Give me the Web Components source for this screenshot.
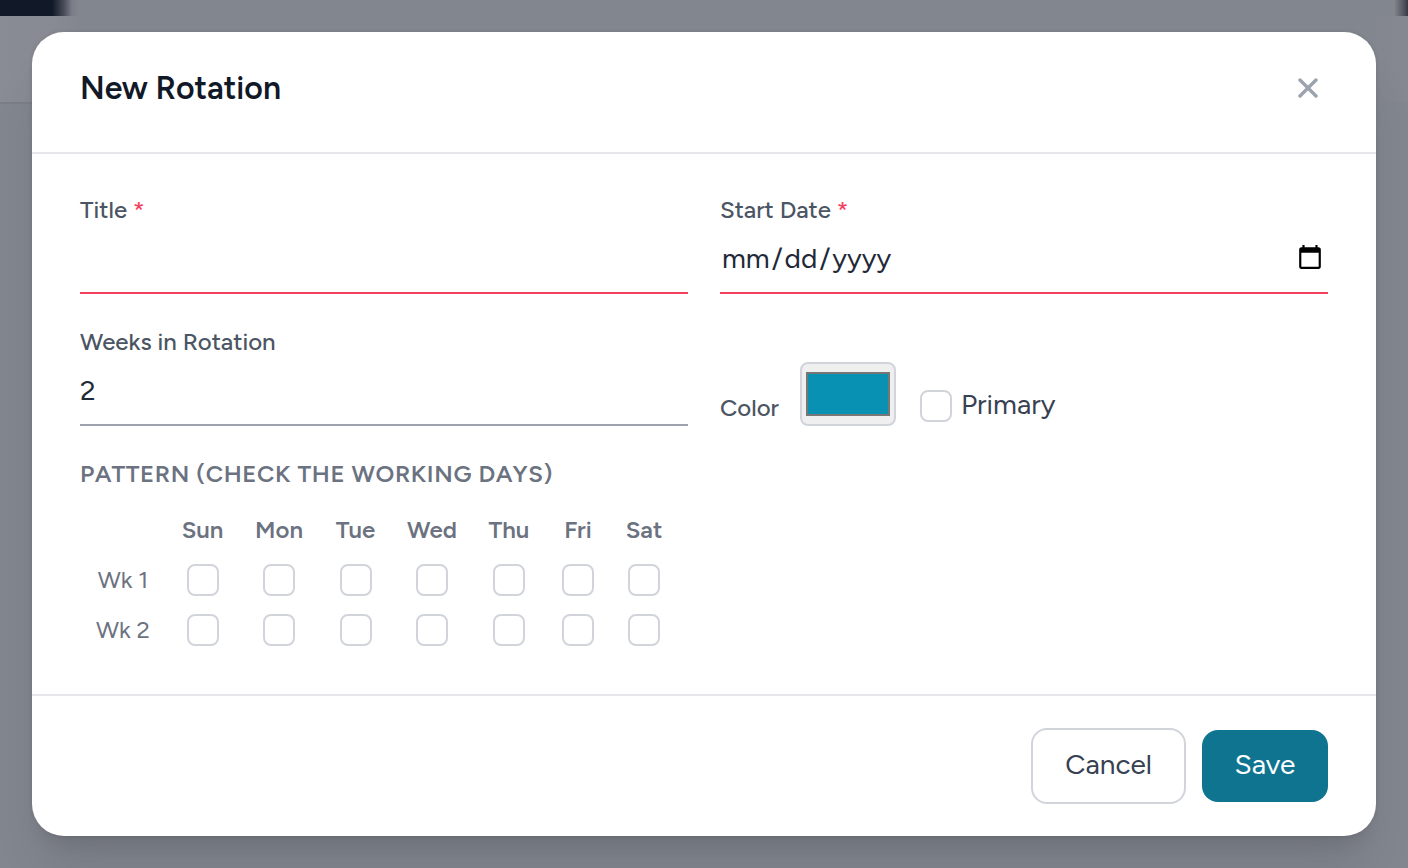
<!DOCTYPE html>
<html lang="en">
<head>
<meta charset="utf-8">
<meta name="viewport" content="width=device-width, initial-scale=1">
<title>New Rotation</title>
<style>
  body {
    margin: 0;
    font-family: Figtree, Lato, "Open Sans", sans-serif;
    color: #1f2937;
  }
</style>
</head>
<body>
<modal-backdrop>
  <modal-dialog heading="New Rotation">
    <rotation-form></rotation-form>
    <action-button slot="actions" variant="secondary">Cancel</action-button>
    <action-button slot="actions" variant="primary">Save</action-button>
  </modal-dialog>
</modal-backdrop>

<script>
class ModalBackdrop extends HTMLElement {
  constructor() {
    super();
    this.attachShadow({ mode: "open" });
    // the blurred page behind: nav strip, page header, content
    this.shadowRoot.innerHTML = `
      <style>
        :host {
          display: block;
          box-sizing: border-box;
          min-height: 100vh;
          padding: 32px;
          background:
            linear-gradient(90deg, #111827 0, #111827 52px, #494d59 64px, #7b7e88 72px, #82868e 80px, #82868e calc(100% - 14px), #4b4e59 calc(100% - 3px), #343743 100%) 0 0 / 100% 16px no-repeat,
            linear-gradient(90deg, #7b7e87 0, #7b7e87 60px, transparent 80px) 0 102px / 100% 2px no-repeat,
            linear-gradient(90deg, #8a8c95 0, #888a93 56px, #82868e 80px, #82868e calc(100% - 40px), #868891 100%) 0 16px / 100% 86px no-repeat,
            #82868f;
        }
      </style>
      <slot></slot>
    `;
  }
}

class ModalDialog extends HTMLElement {
  constructor() {
    super();
    this.attachShadow({ mode: "open" });
  }

  connectedCallback() {
    this.shadowRoot.innerHTML = `
      <style>
        :host {
          display: block;
          background: #fff;
          border-radius: 32px;
          box-shadow: 0 40px 50px -10px rgba(0, 0, 0, 0.1), 0 16px 20px -12px rgba(0, 0, 0, 0.1), 0 0 4px rgba(0, 0, 0, 0.1);
        }

        header {
          display: flex;
          align-items: center;
          justify-content: space-between;
          padding: 36px 48px 44px;
          border-bottom: 2px solid #e5e7eb;
        }

        h2 {
          margin: 0;
          font-size: 32px;
          line-height: 40px;
          font-weight: 600;
          color: #111827;
        }

        .close {
          display: flex;
          align-items: center;
          justify-content: center;
          width: 40px;
          height: 40px;
          padding: 0;
          border: 0;
          background: none;
          color: #9ca3af;
          cursor: pointer;
        }

        main {
          padding: 40px 48px;
        }

        footer {
          display: flex;
          align-items: center;
          justify-content: flex-end;
          gap: 16px;
          padding: 32px 48px;
          border-top: 2px solid #e5e7eb;
        }
      </style>
      <header>
        <h2>${this.getAttribute("heading")}</h2>
        <button class="close" type="button" aria-label="Close">
          <svg width="20" height="20" viewBox="0 0 20 20" fill="none" stroke="currentColor" stroke-width="3.4" stroke-linecap="round">
            <path d="M2 2l16 16M18 2L2 18"/>
          </svg>
        </button>
      </header>
      <main><slot></slot></main>
      <footer><slot name="actions"></slot></footer>
    `;
  }
}

class ActionButton extends HTMLElement {
  constructor() {
    super();
    this.attachShadow({ mode: "open" });
    this.shadowRoot.innerHTML = `
      <style>
        :host {
          display: block;
        }

        button {
          display: block;
          box-sizing: border-box;
          min-width: 126px;
          padding: 14px 32px 18px;
          border: 0;
          border-radius: 16px;
          background: #0e7490;
          color: #fff;
          font: inherit;
          font-size: 28px;
          line-height: 40px;
          cursor: pointer;
        }

        :host([variant="secondary"]) button {
          min-width: 154px;
          border: 2px solid #d1d5db;
          background: #fff;
          color: #374151;
        }
      </style>
      <button type="button"><slot></slot></button>
    `;
  }
}

class FormField extends HTMLElement {
  constructor() {
    super();
    this.attachShadow({ mode: "open" });
  }

  connectedCallback() {
    const type = this.getAttribute("type") || "text";
    const value = this.getAttribute("value") || "";
    const required = this.hasAttribute("required");

    this.shadowRoot.innerHTML = `
      <style>
        :host {
          display: block;
        }

        label {
          display: block;
          font-size: 24px;
          line-height: 32px;
          font-weight: 500;
          color: #4b5563;
        }

        .required {
          color: #f43f5e;
        }

        input {
          display: block;
          box-sizing: border-box;
          width: 100%;
          height: 68px;
          padding: 0 0 2px;
          border: 0;
          border-bottom: 2px solid #9ca3af;
          border-radius: 0;
          outline: 0;
          background: transparent;
          font: inherit;
          font-size: 28px;
          color: #1f2937;
        }

        input:required {
          border-color: #f43f5e;
        }

        input::-webkit-datetime-edit-month-field,
        input::-webkit-datetime-edit-day-field,
        input::-webkit-datetime-edit-year-field {
          padding: 0 2px;
        }

        input::-webkit-calendar-picker-indicator {
          padding: 4px;
        }
      </style>
      <label for="input">${this.getAttribute("label")}${required ? ' <span class="required">*</span>' : ""}</label>
      <input id="input" type="${type}" value="${value}" ${required ? "required" : ""}>
    `;
  }
}

class CheckBox extends HTMLElement {
  constructor() {
    super();
    this.attachShadow({ mode: "open" });
  }

  connectedCallback() {
    const name = this.getAttribute("name") || "";

    this.shadowRoot.innerHTML = `
      <style>
        :host {
          display: inline-block;
          vertical-align: top;
        }

        label {
          display: flex;
          align-items: center;
          gap: 9px;
          font-size: 28px;
          color: #374151;
        }

        input {
          appearance: none;
          flex: none;
          box-sizing: border-box;
          width: 32px;
          height: 32px;
          margin: 0;
          border: 2px solid #d1d5db;
          border-radius: 8px;
          background: #fff;
        }

        input:checked {
          border-color: #0e7490;
          background: #0e7490;
        }
      </style>
      <label><input type="checkbox" ${name ? `aria-label="${name}"` : ""}><slot></slot></label>
    `;
  }
}

class ColorField extends HTMLElement {
  constructor() {
    super();
    this.attachShadow({ mode: "open" });
  }

  connectedCallback() {
    this.shadowRoot.innerHTML = `
      <style>
        :host {
          display: flex;
          align-items: flex-end;
        }

        label {
          min-width: 80px;
          font-size: 24px;
          line-height: 36px;
          font-weight: 500;
          color: #4b5563;
        }

        input {
          box-sizing: border-box;
          width: 96px;
          height: 64px;
          padding: 0;
          border: 2px solid #d1d5db;
          border-radius: 8px;
          background: #efefef;
        }

        input::-webkit-color-swatch-wrapper {
          padding: 8px 4px;
        }

        input::-webkit-color-swatch {
          border: 2px solid #777;
          border-radius: 0;
        }
      </style>
      <label for="color">Color</label>
      <input id="color" type="color" value="${this.getAttribute("value")}">
    `;
  }
}

class PatternGrid extends HTMLElement {
  constructor() {
    super();
    this.attachShadow({ mode: "open" });
  }

  connectedCallback() {
    const days = ["Sun", "Mon", "Tue", "Wed", "Thu", "Fri", "Sat"];
    const widths = [86, 73, 80, 73, 80, 74, 64, 68];
    const weeks = parseInt(this.getAttribute("weeks")) || 1;

    let rows = "";
    for (let week = 1; week <= weeks; week++) {
      rows += `<tr><th scope="row">Wk ${week}</th>${days
        .map((day) => `<td><check-box name="Week ${week} ${day}"></check-box></td>`)
        .join("")}</tr>`;
    }

    this.shadowRoot.innerHTML = `
      <style>
        :host {
          display: block;
        }

        h3 {
          margin: 0 0 16px;
          font-size: 24px;
          line-height: 32px;
          font-weight: 600;
          letter-spacing: 0.025em;
          text-transform: uppercase;
          color: #6b7280;
        }

        table {
          table-layout: fixed;
          width: 598px;
          border-collapse: collapse;
          font-size: 24px;
          line-height: 32px;
          color: #6b7280;
        }

        th {
          padding: 8px 0;
          font-weight: 600;
          text-align: center;
        }

        tbody th {
          padding: 10px 0 8px;
          font-weight: 400;
        }

        td {
          padding: 10px 0 8px;
          text-align: center;
        }
      </style>
      <h3>Pattern (check the working days)</h3>
      <table>
        <colgroup>${widths.map((w) => `<col style="width: ${w}px">`).join("")}</colgroup>
        <thead>
          <tr><td></td>${days.map((day) => `<th scope="col">${day}</th>`).join("")}</tr>
        </thead>
        <tbody>${rows}</tbody>
      </table>
    `;
  }
}

class RotationForm extends HTMLElement {
  constructor() {
    super();
    this.attachShadow({ mode: "open" });
    this.shadowRoot.innerHTML = `
      <style>
        :host {
          display: block;
        }

        form {
          display: grid;
          grid-template-columns: 1fr 1fr;
          gap: 32px;
        }

        .options {
          display: flex;
          align-items: flex-end;
          gap: 24px;
        }

        check-box {
          line-height: 40px;
        }

        check-box span {
          display: block;
          padding-bottom: 4px;
          line-height: 36px;
        }

        pattern-grid {
          grid-column: 1 / -1;
        }
      </style>
      <form>
        <form-field label="Title" required></form-field>
        <form-field label="Start Date" type="date" required></form-field>
        <form-field label="Weeks in Rotation" value="2"></form-field>
        <div class="options">
          <color-field value="#0891b2"></color-field>
          <check-box><span>Primary</span></check-box>
        </div>
        <pattern-grid weeks="2"></pattern-grid>
      </form>
    `;
  }
}

customElements.define("modal-backdrop", ModalBackdrop);
customElements.define("modal-dialog", ModalDialog);
customElements.define("action-button", ActionButton);
customElements.define("form-field", FormField);
customElements.define("check-box", CheckBox);
customElements.define("color-field", ColorField);
customElements.define("pattern-grid", PatternGrid);
customElements.define("rotation-form", RotationForm);
</script>
</body>
</html>
